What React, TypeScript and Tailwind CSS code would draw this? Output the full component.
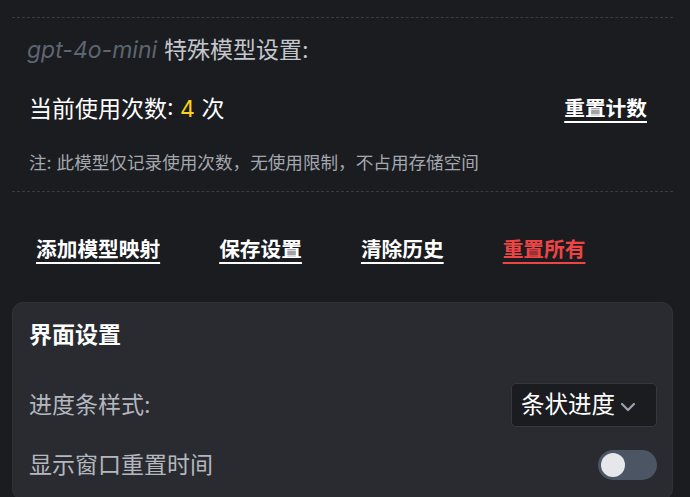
import { useState } from 'react';

const font = "font-['Inter','Noto_Sans_CJK_SC',sans-serif]";

export default function App() {
  const [showReset, setShowReset] = useState(false);
  const [style] = useState('条状进度');

  const actions = [
    { label: '添加模型映射', danger: false },
    { label: '保存设置', danger: false },
    { label: '清除历史', danger: false },
    { label: '重置所有', danger: true },
  ];

  return (
    <div className={`min-h-screen bg-[#1b1c20] pl-3 pr-[17px] pt-[17px] ${font}`}>
      <div className="border-t border-dashed border-[#3a3b40]">
        <div className="h-[64px] flex items-center px-[15px] text-[23px]">
          <span className="italic text-[#5d6571]">gpt-4o-mini</span>
          <span className="ml-[7px] text-[#c3c6cc]">特殊模型设置:</span>
        </div>

        <div className="h-[54px] flex items-center justify-between pl-[17px] pr-[26px]">
          <div className="text-[23px] text-white">
            当前使用次数: <span className="text-[#fcd116]">4</span> 次
          </div>
          <button className="text-[20.7px] font-bold text-white underline underline-offset-[5px] decoration-2">
            重置计数
          </button>
        </div>

        <div className="h-[55px] flex items-center pl-[17px] text-[17.6px] text-[#a3a7ae]">
          注: 此模型仅记录使用次数，无使用限制，不占用存储空间
        </div>
      </div>

      <div className="border-t border-dashed border-[#3a3b40] pt-[43px] pb-[38px]">
        <div className="flex gap-[11px]">
          {actions.map((a) => (
            <button
              key={a.label}
              className={`px-6 leading-[29px] text-[20.7px] font-bold underline underline-offset-[5px] decoration-2 ${a.danger ? 'text-[#ef4444]' : 'text-white'}`}
            >
              {a.label}
            </button>
          ))}
        </div>
      </div>

      <div className="rounded-[11px] border border-[#313237] bg-[#2a2b30] pl-[16px] pr-[15px] pt-[17px] pb-[16px]">
        <h2 className="text-[23px] leading-[30px] font-bold text-white">界面设置</h2>

        <div className="mt-[33px] flex items-center justify-between">
          <span className="text-[23px] text-[#b3b7be]">进度条样式:</span>
          <div className="w-[146px] h-[44px] flex items-center pl-[9px] rounded-[5px] border border-[#36373c] bg-[#1b1c1f]">
            <span className="text-[23.5px] text-white">{style}</span>
            <svg width="16" height="10" viewBox="0 0 16 10" className="ml-[5px] mt-[3px]">
              <path d="M2 2 L8 8 L14 2" fill="none" stroke="#9ca3af" strokeWidth="2.2" strokeLinecap="round" strokeLinejoin="round" />
            </svg>
          </div>
        </div>

        <div className="mt-[21px] flex items-center justify-between">
          <span className="text-[23px] text-[#b3b7be]">显示窗口重置时间</span>
          <button
            onClick={() => setShowReset(!showReset)}
            className={`w-[59px] h-[30px] rounded-full p-[3px] flex ${showReset ? 'bg-[#3b82f6] justify-end' : 'bg-[#4b5563] justify-start'}`}
          >
            <span className="w-[24px] h-[24px] rounded-full bg-[#e5e7eb]" />
          </button>
        </div>
      </div>
    </div>
  );
}
